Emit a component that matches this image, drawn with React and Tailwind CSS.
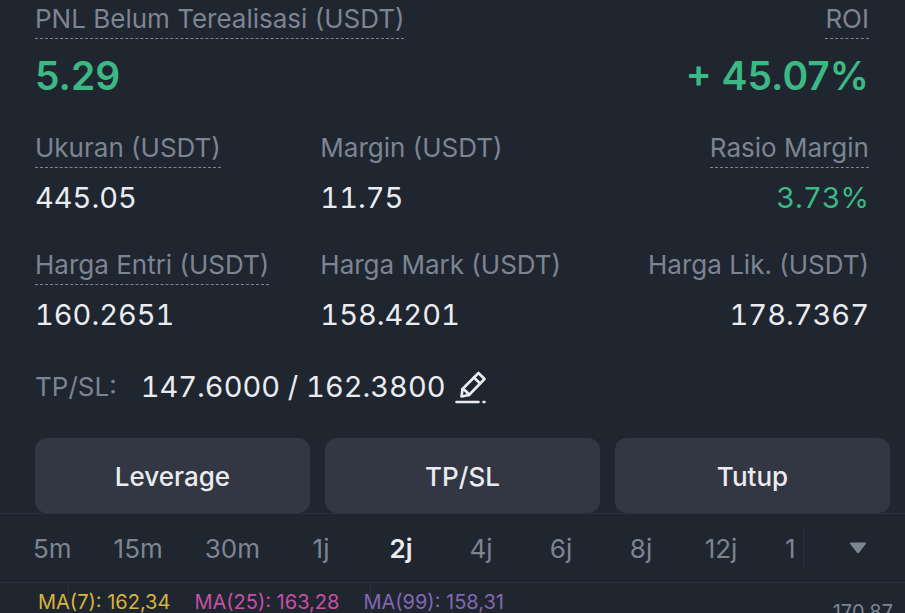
import React, { useState } from "react"

const intervals = ["5m", "15m", "30m", "1j", "2j", "4j", "6j", "8j", "12j"]

const stats = [
  { label: "Ukuran (USDT)", value: "445.05", hint: true },
  { label: "Margin (USDT)", value: "11.75" },
  { label: "Rasio Margin", value: "3.73%", hint: true, end: true, positive: true },
  { label: "Harga Entri (USDT)", value: "160.2651", hint: true },
  { label: "Harga Mark (USDT)", value: "158.4201" },
  { label: "Harga Lik. (USDT)", value: "178.7367", end: true },
]

const averages = [
  { label: "MA(7): 162,34", color: "text-[#d9b43c]" },
  { label: "MA(25): 163,28", color: "text-[#c94fa5]" },
  { label: "MA(99): 158,31", color: "text-[#8567b3]" },
]

function Label({ hint, children }) {
  return (
    <dt
      className={`border-b border-dashed pb-0.5 text-[26px] leading-[34px] whitespace-nowrap text-[#7d8492] ${
        hint ? "border-[#7d8492]" : "border-transparent"
      }`}
    >
      {children}
    </dt>
  )
}

function Stat({ label, value, hint, end, positive }) {
  return (
    <div className={`flex flex-col gap-3 ${end ? "items-end" : "items-start"}`}>
      <Label hint={hint}>{label}</Label>
      <dd
        className={`text-[29px] leading-9 tabular-nums ${
          positive ? "text-[#3cb885]" : "text-[#eaecef]"
        }`}
      >
        {value}
      </dd>
    </div>
  )
}

function EditIcon() {
  return (
    <svg
      width="32"
      height="34"
      viewBox="0 0 32 34"
      fill="none"
      stroke="currentColor"
      strokeWidth="2.6"
      strokeLinejoin="round"
      strokeLinecap="round"
      aria-hidden="true"
    >
      <path d="M7.5 26.5 L8.5 19 L24.5 3 L30.5 9 L15 25 Z" />
      <path d="M20 7.5 L26 13.5 M8.5 19 Q12.5 20.5 15 25" />
      <path d="M2.5 32 H24.5 M29.5 32 H30.5" />
    </svg>
  )
}

export default function App() {
  const [interval, setInterval] = useState("2j")

  return (
    <main className="flex h-screen flex-col overflow-hidden bg-[#1f2630] font-['Inter',sans-serif]">
      <section className="pt-0.5 pl-[35px]">
        <div className="pr-9">
          <dl className="flex justify-between">
            <div className="flex flex-col items-start gap-3">
              <Label hint>PNL Belum Terealisasi (USDT)</Label>
              <dd className="text-[39px] leading-[50px] font-semibold text-[#3cb885]">5.29</dd>
            </div>
            <div className="flex flex-col items-end gap-3">
              <Label hint>ROI</Label>
              <dd className="text-[39px] leading-[50px] font-semibold text-[#3cb885]">+ 45.07%</dd>
            </div>
          </dl>

          <dl className="mt-[30px] grid grid-cols-[285fr_275fr_273fr] gap-y-8">
            {stats.map((stat) => (
              <Stat key={stat.label} {...stat} />
            ))}
          </dl>

          <div className="mt-9 flex items-center text-[29px] leading-9 text-[#eaecef]">
            <span className="mr-6 text-[26px] text-[#7d8492]">TP/SL:</span>
            <span className="tabular-nums">147.6000 / 162.3800</span>
            <button type="button" aria-label="Edit TP/SL" className="ml-2">
              <EditIcon />
            </button>
          </div>
        </div>

        <div className="mt-[33px] grid grid-cols-3 gap-[15px] pr-[15px]">
          {["Leverage", "TP/SL", "Tutup"].map((action) => (
            <button
              key={action}
              type="button"
              className="h-[75px] rounded-xl bg-[#323743] pt-0.5 text-[26px] font-medium text-[#eaecef]"
            >
              {action}
            </button>
          ))}
        </div>
      </section>

      {/* Chart intervals */}
      <nav className="flex h-[70px] shrink-0 items-center border-y border-[#2b313c]">
        <div className="flex min-w-0 flex-1 overflow-hidden pl-3 text-[26px] text-[#7d8492]">
          {intervals.map((item) => (
            <button
              key={item}
              type="button"
              aria-pressed={item === interval}
              onClick={() => setInterval(item)}
              className={`min-w-20 shrink-0 px-[21px] ${
                item === interval ? "font-semibold text-[#eaecef]" : ""
              }`}
            >
              {item}
            </button>
          ))}
          <button type="button" className="shrink-0 pl-6">
            1
          </button>
        </div>
        <button
          type="button"
          aria-label="Interval lainnya"
          className="flex h-11 w-[102px] items-center border-l border-[#2b313c] pl-[45px] text-[#7d8492]"
        >
          <svg width="18" height="12" viewBox="0 0 18 12" fill="currentColor" aria-hidden="true">
            <path d="M2 0.5 H16 Q18 0.5 16.8 2 L10.2 10.6 Q9 12 7.8 10.6 L1.2 2 Q0 0.5 2 0.5 Z" />
          </svg>
        </button>
      </nav>

      {/* Top edge of the chart */}
      <section className="relative flex min-h-0 flex-1 justify-between overflow-hidden pr-3 pl-[38px]">
        <div className="absolute inset-y-0 left-[68px] w-px bg-[#2b313c]" />
        <div className="absolute inset-y-0 left-[370px] w-px bg-[#2b313c]" />
        <div className="relative flex gap-6 pt-[7px] text-[20px] leading-6">
          {averages.map(({ label, color }) => (
            <span key={label} className={color}>
              {label}
            </span>
          ))}
        </div>
        <span className="pt-[17px] text-[20px] leading-6 text-[#7d8492]">170.87</span>
      </section>
    </main>
  )
}
